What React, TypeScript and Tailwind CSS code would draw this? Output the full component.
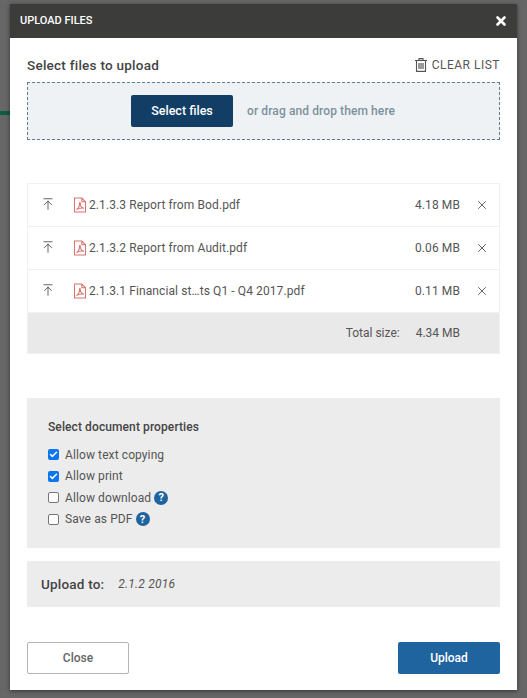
import React from 'react';
import { X, ArrowUpToLine, Check } from 'lucide-react';

const files = [
  { name: '2.1.3.3 Report from Bod.pdf', size: '4.18 MB' },
  { name: '2.1.3.2 Report from Audit.pdf', size: '0.06 MB' },
  { name: '2.1.3.1 Financial st…ts Q1 - Q4 2017.pdf', size: '0.11 MB' },
];

function PdfIcon(): React.ReactElement {
  return (
    <svg width="12" height="16" viewBox="0 0 13 16" fill="none" stroke="#d9706c" strokeWidth="1.100" aria-hidden="true">
      <path d="M.5.5h8l4 4v11H.5z" />
      <path d="M8.500.5v4h4" />
      <path d="M2.500 13c2-1 3.500-4 3.500-7 0-1 .8-1 .8 0 0 3 2 5 4 5.500-2-.3-5.500 0-8.300 1.500z" />
    </svg>
  );
}

// outlined bin with three bars, as in the CLEAR LIST action
function BinIcon(): React.ReactElement {
  return (
    <svg width="12" height="14" viewBox="0 0 12 14" fill="none" stroke="#555" strokeWidth="1.100" aria-hidden="true">
      <path d="M0 2.500h12" />
      <path d="M4 2.500V.6h4v1.900" />
      <path d="M1.500 2.500v10.900h9V2.500" />
      <path d="M4 5v6M6 5v6M8 5v6" strokeWidth="1.200" />
    </svg>
  );
}

function HelpIcon(): React.ReactElement {
  return (
    <span className="ml-[3px] flex h-[14px] w-[14px] items-center justify-center rounded-full bg-[#1f639f] text-[11px] font-bold leading-none text-white">
      ?
    </span>
  );
}

function Option({ label, checked, help }: { label: string; checked?: boolean; help?: boolean }): React.ReactElement {
  return (
    <div className="flex h-[21.500px] items-center">
      {checked ? (
        <span className="flex h-[11px] w-[11px] items-center justify-center rounded-[2px] bg-[#0b76ef]">
          <Check size={9} strokeWidth={4} className="text-white" aria-hidden="true" />
        </span>
      ) : (
        <span className="h-[11px] w-[11px] rounded-[2px] border border-[#767676] bg-white" />
      )}
      <span className="ml-[6px] text-[12px] tracking-[0.1px] text-[#555]">{label}</span>
      {help && <HelpIcon />}
    </div>
  );
}

export default function App(): React.ReactElement {
  return (
    <div className="relative h-[698px] w-[527px] overflow-hidden bg-[#666] px-[10px] pt-[4px] font-['Roboto',sans-serif]">
      {/* page behind the overlay */}
      <div className="absolute left-0 top-[111px] h-[4px] w-[10px] bg-[#0c5c46]" />

      <div className="relative flex h-[686px] flex-col bg-white shadow-[0_1px_4px_rgba(0,0,0,0.5)]">
        <div className="flex h-[34px] shrink-0 items-center justify-between bg-[#3c3d3a] pl-[10px] pr-[9px]">
          <span className="text-[11px] font-medium text-white">UPLOAD FILES</span>
          <X size={14} strokeWidth={4.500} className="text-white" aria-hidden="true" />
        </div>

        <div className="flex flex-1 flex-col px-[17px]">
          <div className="flex h-[44px] shrink-0 items-center justify-between pt-[10px]">
            <span className="text-[13.500px] font-medium tracking-[0.25px] text-[#444]">Select files to upload</span>
            <span className="flex items-center gap-[5px] text-[12px] tracking-[0.5px] text-[#555]">
              <BinIcon />
              CLEAR LIST
            </span>
          </div>

          <div className="flex h-[58px] shrink-0 items-center border border-dashed border-[#5f7f8c] bg-[#eff2f5] pl-[103px]">
            <div className="flex h-[32px] w-[102px] items-center justify-center rounded-[2px] bg-[#123e66] text-[12.500px] font-medium text-white">
              Select files
            </div>
            <span className="ml-[14px] text-[12px] font-medium tracking-[0.1px] text-[#7d919d]">or drag and drop them here</span>
          </div>

          <div className="mt-[43px] shrink-0 border border-[#f1f1f1]">
            {files.map((file) => (
              <div key={file.name} className="flex h-[43px] items-center border-b border-[#f1f1f1] pl-[13px] pr-[10px] text-[12px] tracking-[0.1px] text-[#555]">
                <ArrowUpToLine size={14} strokeWidth={1.400} className="-translate-y-[1px] text-[#444]" aria-hidden="true" />
                <span className="ml-[19px] flex items-center">
                  <PdfIcon />
                </span>
                <span className="ml-[3px] flex-1">{file.name}</span>
                <span>{file.size}</span>
                <X size={14} strokeWidth={1.400} className="ml-[15px] text-[#444]" aria-hidden="true" />
              </div>
            ))}
            <div className="flex h-[40px] items-center justify-end bg-[#e9e9e9] pr-[39px] text-[12px] text-[#555]">
              <span>Total size:</span>
              <span className="ml-[16px]">4.34 MB</span>
            </div>
          </div>

          <div className="mt-[44px] h-[150px] shrink-0 bg-[#ececec] px-[21px] pt-[20px]">
            <div className="mb-[8px] text-[12px] font-medium tracking-[0.1px] text-[#444]">Select document properties</div>
            <Option label="Allow text copying" checked />
            <Option label="Allow print" checked />
            <Option label="Allow download" help />
            <Option label="Save as PDF" help />
          </div>

          <div className="mt-[13px] flex h-[46px] shrink-0 items-center bg-[#ececec] px-[14px]">
            <span className="text-[13.500px] font-medium tracking-[0.2px] text-[#444]">Upload to:</span>
            <span className="ml-[14px] text-[12px] italic tracking-[0.2px] text-[#555]">2.1.2 2016</span>
          </div>

          <div className="mt-[35px] flex shrink-0 justify-between">
            <div className="flex h-[32px] w-[102px] items-center justify-center rounded-[2px] border border-[#b5b5b5] bg-white text-[12px] font-medium text-[#666]">
              Close
            </div>
            <div className="flex h-[32px] w-[102px] items-center justify-center rounded-[2px] bg-[#1f639f] text-[12px] font-medium text-white">
              Upload
            </div>
          </div>
        </div>
      </div>
    </div>
  );
}
